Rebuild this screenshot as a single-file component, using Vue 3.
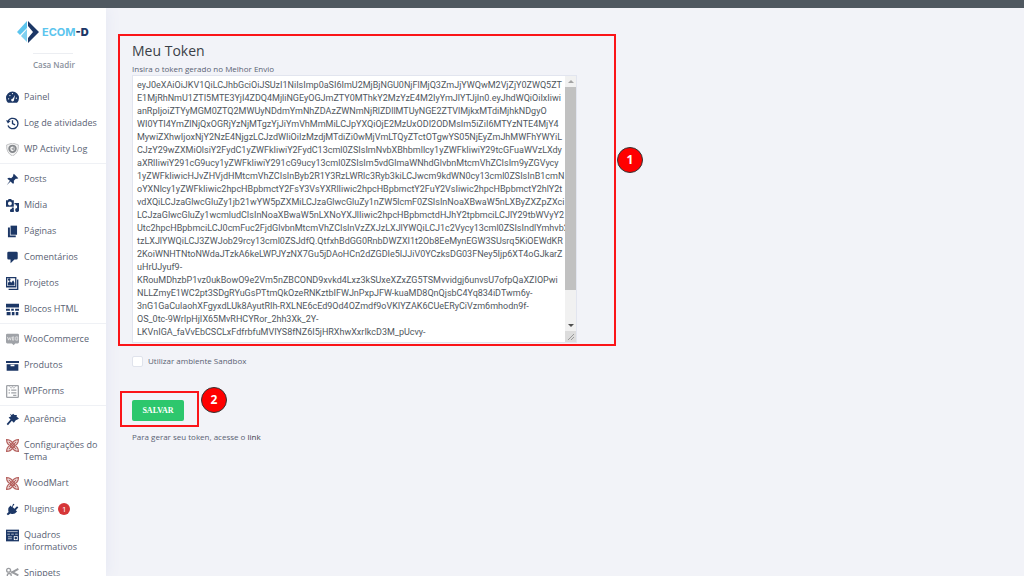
<script setup>
import { ref } from 'vue'

const token = ref([
  'eyJ0eXAiOiJKV1QiLCJhbGciOiJSUzI1NiIsImp0aSI6ImU2MjBjNGU0NjFlMjQ3ZmJjYWQwM2VjZjY0ZWQ5ZT',
  'E1MjRhNmU1ZTI5MTE3YjI4ZDQ4MjliNGEyOGJmZTY0MThkY2MzYzE4M2IyYmJlYTJjIn0.eyJhdWQiOiIxIiwi',
  'anRpIjoiZTYyMGM0ZTQ2MWUyNDdmYmNhZDAzZWNmNjRlZDllMTUyNGE2ZTVlMjkxMTdiMjhkNDgyO',
  'WI0YTI4YmZlNjQxOGRjYzNjMTgzYjJiYmVhMmMiLCJpYXQiOjE2MzUxODI2ODMsIm5iZiI6MTYzNTE4MjY4',
  'MywiZXhwIjoxNjY2NzE4NjgzLCJzdWIiOiIzMzdjMTdiZi0wMjVmLTQyZTctOTgwYS05NjEyZmJhMWFhYWYiL',
  'CJzY29wZXMiOlsiY2FydC1yZWFkIiwiY2FydC13cml0ZSIsImNvbXBhbmllcy1yZWFkIiwiY29tcGFuaWVzLXdy',
  'aXRlIiwiY291cG9ucy1yZWFkIiwiY291cG9ucy13cml0ZSIsIm5vdGlmaWNhdGlvbnMtcmVhZCIsIm9yZGVycy',
  '1yZWFkIiwicHJvZHVjdHMtcmVhZCIsInByb2R1Y3RzLWRlc3Ryb3kiLCJwcm9kdWN0cy13cml0ZSIsInB1cmN',
  'oYXNlcy1yZWFkIiwic2hpcHBpbmctY2FsY3VsYXRlIiwic2hpcHBpbmctY2FuY2VsIiwic2hpcHBpbmctY2hlY2t',
  'vdXQiLCJzaGlwcGluZy1jb21wYW5pZXMiLCJzaGlwcGluZy1nZW5lcmF0ZSIsInNoaXBwaW5nLXByZXZpZXci',
  'LCJzaGlwcGluZy1wcmludCIsInNoaXBwaW5nLXNoYXJlIiwic2hpcHBpbmctdHJhY2tpbmciLCJlY29tbWVyY2',
  'Utc2hpcHBpbmciLCJ0cmFuc2FjdGlvbnMtcmVhZCIsInVzZXJzLXJlYWQiLCJ1c2Vycy13cml0ZSIsIndlYmhvb2',
  'tzLXJlYWQiLCJ3ZWJob29rcy13cml0ZSJdfQ.QtfxhBdGG0RnbDWZXI1t2Ob8EeMynEGW3SUsrq5KiOEWdKR',
  '2KoiWNHTNtoNWdaJTzkA6keLWPJYzNX7Gu5jDAoHCn2dZGDIe5IJJiV0YCzksDG03FNey5Ijp6XT4oGJkarZ',
  'uHrUJyuf9-',
  'KRouMDhzbP1vz0ukBowO9e2Vm5nZBCOND9xvkd4Lxz3kSUxeXZxZG5TSMvvidgj6unvsU7ofpQaXZIOPwi',
  'NLLZmyE1WC2pt3SDgRYuGsPTtmQkOzeRNKztbIFWJnPxpJFW-kuaMD8QnQjsbC4Yq834iDTwm6y-',
  '3nG1GaCulaohXFgyxdLUk8AyutRIh-RXLNE6cEd9Od4OZmdf9oVKIYZAK6CUeERyCiVzm6mhodn9f-',
  'OS_0tc-9WrIpHjIX65MvRHCYRor_2hh3Xk_2Y-',
  'LKVnIGA_faVvEbCSCLxFdfrbfuMVIYS8fNZ6I5jHRXhwXxrIkcD3M_pUcvy-',
].join('\n'))
const sandbox = ref(false)

const groups = [
  [
    { icon: 'gauge', label: 'Painel' },
    { icon: 'history', label: 'Log de atividades' },
    { icon: 'shield', label: 'WP Activity Log' },
  ],
  [
    { icon: 'pin', label: 'Posts' },
    { icon: 'media', label: 'Mídia' },
    { icon: 'pages', label: 'Páginas' },
    { icon: 'comment', label: 'Comentários' },
    { icon: 'gallery', label: 'Projetos' },
    { icon: 'blocks', label: 'Blocos HTML' },
  ],
  [
    { icon: 'woo', label: 'WooCommerce' },
    { icon: 'archive', label: 'Produtos' },
    { icon: 'form', label: 'WPForms' },
  ],
  [
    { icon: 'brush', label: 'Aparência' },
    { icon: 'knot', label: 'Configurações do Tema' },
    { icon: 'knot', label: 'WoodMart' },
    { icon: 'plug', label: 'Plugins', count: 1 },
    { icon: 'board', label: 'Quadros informativos' },
    { icon: 'scissors', label: 'Snippets' },
  ],
]
</script>

<template>
  <div class="page">
    <header class="topbar"></header>
    <div class="body">
      <aside class="sidebar">
        <div class="logo">
          <svg class="mark" viewBox="0 0 22 22" aria-hidden="true">
            <path d="M10 0 L0 11 L3 14 L10 7 Z" fill="#5cc5ee" />
            <path d="M10 8 L4 15 L10 21 Z" fill="#7fd0f0" />
            <path d="M11 0 L22 11 L11 22 V17 L16 11 L11 5 Z" fill="#1c3766" />
          </svg>
          <span class="brand">ECOM<b>-D</b></span>
        </div>
        <div class="store">Casa Nadir</div>
        <nav>
          <ul v-for="(group, g) in groups" :key="g" class="group">
            <li v-for="item in group" :key="item.label">
              <a href="#" class="item">
                <svg class="icon" viewBox="0 0 20 20" aria-hidden="true">
                  <g v-if="item.icon === 'gauge'">
                    <path d="M3 18 A10 10 0 1 1 17 18 Z" fill="#1c3766" />
                    <path d="M9 14 L14 6 L12 15 Z" fill="#fff" />
                    <circle cx="10" cy="14" r="2" fill="#fff" />
                    <g fill="#fff"><circle cx="4" cy="12" r="1" /><circle cx="6" cy="7" r="1" /><circle cx="10" cy="4" r="1" /><circle cx="16" cy="11" r="1" /></g>
                  </g>
                  <g v-else-if="item.icon === 'history'" fill="none" stroke="#1c3766" stroke-width="2">
                    <path d="M3 13 A8 8 0 1 0 3 7" /><path d="M10 5 V10 L14 12" />
                    <path d="M0 5 L3 10 L7 6 Z" fill="#1c3766" stroke="none" />
                  </g>
                  <g v-else-if="item.icon === 'shield'">
                    <path d="M10 0 L19 3 Q20 15 10 20 Q0 15 1 3 Z" fill="#f4f4f4" stroke="#a5a7aa" stroke-width="1" />
                    <circle cx="10" cy="9" r="5" fill="none" stroke="#85888c" stroke-width="3" />
                    <path d="M8 9 L14 5 L12 12 Z" fill="#a5a7aa" />
                  </g>
                  <path v-else-if="item.icon === 'pin'" fill="#1c3766" d="M12 1 L19 8 L17 9 L15 9 L12 12 Q13 15 11 17 L7 13 L1 19 L6 12 L2 9 Q4 6 8 8 L11 5 V3 Z" />
                  <g v-else-if="item.icon === 'media'" fill="#1c3766">
                    <path fill-rule="evenodd" d="M0 2 H3 L4 0 H8 L9 2 H12 V12 H0 Z M6 4 A3 3 0 1 0 6 10 A3 3 0 1 0 6 4 Z" />
                    <path d="M13 6 H20 V16 A3 3 0 1 1 17 14 V10 H15 V8 H13 Z" /><path d="M9 13 H12 V17 A3 3 0 1 1 9 15 Z" />
                  </g>
                  <g v-else-if="item.icon === 'pages'" fill="#1c3766">
                    <path d="M7 1 H17 V15 H7 Z" /><path d="M3 4 H6 V16 H15 V19 H3 Z" />
                  </g>
                  <path v-else-if="item.icon === 'comment'" fill="#1c3766" d="M4 1 H16 Q18 1 18 3 V11 Q18 13 16 13 H13 L7 19 V13 H4 Q2 13 2 11 V3 Q2 1 4 1 Z" />
                  <g v-else-if="item.icon === 'gallery'" fill="none" stroke="#1c3766" stroke-width="2">
                    <path d="M1 1 H15 V15 H1 Z" /><path d="M18 4 V19 H4" />
                    <path d="M3 13 V9 L6 6 L8 9 L11 5 L13 9 V13 Z" fill="#1c3766" stroke="none" /><circle cx="5" cy="4" r="1" />
                  </g>
                  <path v-else-if="item.icon === 'blocks'" fill="#1c3766" d="M0 1 H20 V7 H0 Z M0 9 H6 V12 H0 Z M8 9 H12 V12 H8 Z M14 9 H20 V12 H14 Z M1 14 H7 V19 H1 Z M9 14 H13 V19 H9 Z M15 14 H19 V19 H15 Z" />
                  <g v-else-if="item.icon === 'woo'">
                    <path d="M2 1 H18 Q20 1 20 3 V14 Q20 16 18 16 H14 L12 19 L9 16 H2 Q0 16 0 14 V3 Q0 1 2 1 Z" fill="#a0a3a8" />
                    <path d="M2 6 L4 11 L5 7 L7 11 L8 6 M10 6 H12 V11 H10 Z M15 6 H18 V11 H15 Z" fill="none" stroke="#f4f4f4" stroke-width="1" />
                  </g>
                  <path v-else-if="item.icon === 'archive'" fill="#1c3766" fill-rule="evenodd" d="M0 3 H20 V6 H0 Z M1 8 H19 V18 H1 Z M7 9 V11 H13 V9 Z" />
                  <g v-else-if="item.icon === 'form'" fill="none" stroke="#a0a3a8">
                    <rect x="1" y="1" width="18" height="18" rx="1" stroke-width="2" />
                    <path d="M5 2 L8 5 L10 2 L12 5 L15 2" stroke-width="1" />
                    <path d="M4 8 H6 M8 8 H16 M4 12 H6 M8 12 H16 M11 16 H16" stroke-width="2" />
                  </g>
                  <path v-else-if="item.icon === 'brush'" fill="#1c3766" d="M6 1 L9 3 L11 1 L13 3 H17 L16 5 L20 9 L15 11 L12 15 L9 12 L3 19 L1 17 L7 10 L4 7 L8 5 Z" />
                  <g v-else-if="item.icon === 'knot'" fill="none" stroke="#b5625f" stroke-width="2">
                    <path d="M1 1 Q7 1 10 6 Q13 1 19 1 Q19 7 14 10 Q19 13 19 19 Q13 19 10 14 Q7 19 1 19 Q1 13 6 10 Q1 7 1 1 Z" />
                    <path d="M4 4 L16 16 M16 4 L4 16" /><circle cx="10" cy="10" r="3" />
                  </g>
                  <path v-else-if="item.icon === 'plug'" fill="#1c3766" d="M11 1 L13 2 L10 6 L13 9 L17 5 L19 7 L15 11 L17 13 Q12 19 7 16 L3 19 L1 17 L4 14 Q2 8 7 4 L9 6 Z" />
                  <g v-else-if="item.icon === 'board'">
                    <rect x="0" y="1" width="20" height="18" fill="#1c3766" />
                    <path d="M2 4 H18 M2 8 H6 M8 8 H12 M14 8 H18 M3 12 H9 M3 15 H9" stroke="#fff" stroke-width="1" />
                    <path d="M12 11 H18 V17 H12 Z" fill="#fff" /><circle cx="15" cy="14" r="2" fill="#1c3766" />
                  </g>
                  <g v-else fill="none" stroke="#9a9ca0" stroke-width="3">
                    <path d="M8 9 L19 3 M8 7 L19 13" /><circle cx="4" cy="5" r="3" stroke-width="2" /><circle cx="5" cy="13" r="3" stroke-width="2" />
                  </g>
                </svg>
                <span>{{ item.label }}</span>
                <span v-if="item.count" class="count">{{ item.count }}</span>
              </a>
            </li>
          </ul>
        </nav>
      </aside>

      <main class="content">
        <form @submit.prevent>
          <section class="token">
            <h1>Meu Token</h1>
            <label for="token" class="hint">Insira o token gerado no Melhor Envio</label>
            <div class="field">
              <textarea id="token" v-model="token" rows="20" spellcheck="false"></textarea>
              <div class="scroll" aria-hidden="true">
                <span class="arrow up"></span>
                <span class="track"><span class="thumb"></span></span>
                <span class="arrow down"></span>
                <svg class="grip" viewBox="0 0 11 11"><path d="M3 9 L9 3 M6 9 L9 6" stroke="#999" /></svg>
              </div>
            </div>
            <span class="frame"></span>
            <span class="step">1</span>
          </section>
          <div class="option">
            <input id="sandbox" v-model="sandbox" type="checkbox" />
            <label for="sandbox">Utilizar ambiente Sandbox</label>
          </div>
          <div class="actions">
            <button type="submit">SALVAR</button>
            <span class="frame"></span>
            <span class="step">2</span>
          </div>
          <p class="help">Para gerar seu token, acesse o <a href="#">link</a></p>
        </form>
      </main>
    </div>
  </div>
</template>

<style>
html, body { background: #f2f3f8; }
</style>

<style scoped>
* { box-sizing: border-box; }
.page {
  height: 100vh;
  display: flex;
  flex-direction: column;
  overflow: hidden;
  background: #f2f3f8;
  color: #596273;
  font: 9px/12px "Open Sans", "Noto Sans", sans-serif;
}
.topbar { position: relative; z-index: 1; flex: none; height: 8px; background: #4f5860; }
.body { flex: 1; min-height: 0; display: flex; }
.sidebar {
  flex: none;
  width: 106px;
  background: #fff;
  box-shadow: 0 0 14px #e3e6f3;
}
.logo { display: flex; align-items: center; gap: 3px; padding: 13px 0 0 17px; }
.mark { width: 22px; height: 22px; }
.brand { color: #5cc5ee; font: 700 11px/22px Inter, sans-serif; }
.brand b { color: #1c3766; }
.store {
  width: 40px;
  margin: 10px auto 0;
  padding-top: 5px;
  border-top: 1px solid #eceef2;
  font-size: 8px;
  font-weight: 600;
  color: #8a919d;
  white-space: nowrap;
}
nav { padding-top: 13px; }
.group { list-style: none; margin: 0; padding: 0; }
.group + .group { margin-top: 1px; padding-top: 2px; border-top: 1px solid #eff1f5; }
.group:last-child { padding-top: 0; }
.item {
  display: flex;
  gap: 5px;
  padding: 7px 4px 7px 6px;
  color: inherit;
  text-decoration: none;
}
.icon { flex: none; width: 13px; height: 13px; margin-bottom: -1px; }
.count {
  width: 12px;
  height: 12px;
  margin-left: -1px;
  border-radius: 50%;
  background: #d63638;
  color: #fff;
  font-size: 8px;
  text-align: center;
}
.content { flex: 1; min-width: 0; padding: 33px 26px; font-size: 8px; }
.token { position: relative; max-width: 445px; }
h1 { margin: 0; font-size: 14px; line-height: 20px; font-weight: 400; color: #3a3f47; }
.hint { display: block; padding-top: 2px; }
.field {
  display: flex;
  border: 1px solid #e2e5ef;
  background: #fff;
}
textarea {
  flex: 1;
  min-width: 0;
  padding: 3px 0 3px 4px;
  border: 0;
  outline: 0;
  resize: none;
  overflow: hidden;
  white-space: pre;
  background: #fff;
  color: #50575e;
  font: 9px/13px Roboto, "Open Sans", sans-serif;
}
.scroll { flex: none; width: 11px; display: flex; flex-direction: column; background: #f1f1f1; }
.arrow { height: 11px; display: grid; place-items: center; }
.arrow::before { content: ""; border: 3px solid transparent; }
.up::before { border-top: 0; border-bottom-color: #a3a3a3; }
.down::before { border-bottom: 0; border-top-color: #505050; }
.track { flex: 1; }
.thumb { display: block; height: 87%; background: #c1c1c1; }
.grip { width: 11px; height: 11px; background: #dcdcdc; }
.frame {
  position: absolute;
  inset: -7px -39px -3px -14px;
  border: 2px solid #fb1418;
  pointer-events: none;
}
.step {
  position: absolute;
  top: 106px;
  right: -66px;
  width: 26px;
  height: 26px;
  border: 1px solid #333;
  border-radius: 50%;
  background: #f00;
  color: #fff;
  font: 700 12px/24px "Open Sans", sans-serif;
  text-align: center;
}
.option { display: flex; align-items: center; gap: 5px; padding-top: 12px; }
input {
  appearance: none;
  width: 11px;
  height: 11px;
  margin: 0;
  border: 1px solid #e0e3ec;
  border-radius: 2px;
  background: #fff;
}
input:checked { background: #2dc76d; }
.actions { position: relative; width: max-content; margin-top: 33px; }
.actions .frame { inset: -9px -15px -6px -12px; }
.actions .step { top: -13px; right: -43px; }
button {
  display: block;
  width: 52px;
  height: 21px;
  padding: 0;
  border: 0;
  border-radius: 2px;
  background: #2dc76d;
  color: #fff;
  font: 700 8px/21px "Liberation Serif", serif;
}
.help { margin: 10px 0 0; }
.help a { color: #3a3f47; text-decoration: none; }
</style>
